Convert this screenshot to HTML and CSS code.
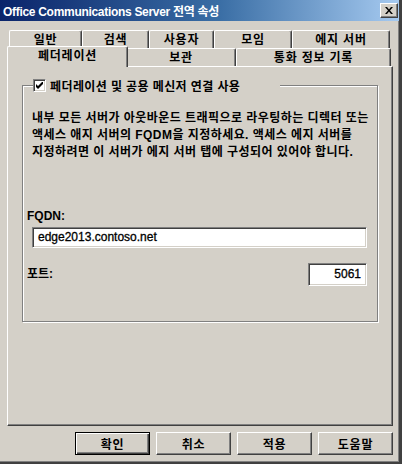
FILE: index.html
```html
<!DOCTYPE html>
<html lang="ko">
<head>
    <meta charset="UTF-8">
    <title>Office Communications Server 전역 속성</title>
    <link rel="stylesheet" href="styles.css">
</head>
<body>
    <div class="window">
        <!-- Title bar -->
        <div class="titlebar">
            <span class="title">Office Communications Server 전역 속성</span>
            <span class="close-btn">
                <svg width="8" height="7" viewBox="0 0 8 7"><path d="M0 0h2l2 2.5L6 0h2L5 3.5 8 7H6L4 4.5 2 7H0l3-3.5z" fill="#000"/></svg>
            </span>
        </div>

        <!-- Tabs -->
        <div class="tabs">
            <div class="tab-row">
                <div class="tab t-general">일반</div>
                <div class="tab t-search">검색</div>
                <div class="tab t-user">사용자</div>
                <div class="tab t-meeting">모임</div>
                <div class="tab t-edge">에지 서버</div>
            </div>
            <div class="tab-row">
                <div class="tab active t-federation">페더레이션</div>
                <div class="tab t-archive">보관</div>
                <div class="tab t-cdr">통화 정보 기록</div>
            </div>
        </div>

        <!-- Tab page -->
        <div class="panel">
            <div class="group">
                <div class="legend">
                    <span class="checkbox">
                        <svg width="7" height="7" viewBox="0 0 7 7"><path d="M0 2v3l2 2 5-5V-1L2 4z" fill="#000"/></svg>
                    </span>
                    <span>페더레이션 및 공용 메신저 연결 사용</span>
                </div>
                <p class="desc">
                    내부 모든 서버가 아웃바운드 트래픽으로 라우팅하는 디렉터 또는<br>
                    액세스 애지 서버의 FQDM을 지정하세요. 액세스 에지 서버를<br>
                    지정하려면 이 서버가 에지 서버 탭에 구성되어 있어야 합니다.
                </p>
                <div class="field-label">FQDN:</div>
                <div class="textbox wide">edge2013.contoso.net</div>
                <div class="port-row">
                    <span class="field-label">포트:</span>
                    <div class="textbox port">5061</div>
                </div>
            </div>
        </div>

        <!-- Dialog buttons -->
        <div class="buttons">
            <button class="default">확인</button>
            <button>취소</button>
            <button>적용</button>
            <button>도움말</button>
        </div>
    </div>
</body>
</html>
```

FILE: styles.css
```css
/* Classic dialog */
body {
    margin: 0;
    padding: 0;
    background: #d4d0c8;
    font-family: "Liberation Sans", "Noto Sans CJK KR", sans-serif;
    font-size: 12px;
    font-weight: bold;
    color: #000;
}

.window {
    box-sizing: border-box;
    width: 402px;
    height: 464px;
    background: #d4d0c8;
    border-right: 3px solid #404040;
    border-bottom: 2px solid #404040;
    box-shadow: inset -1px -1px 0 #808080;
}

.titlebar {
    height: 21px;
    display: flex;
    align-items: center;
    justify-content: space-between;
    padding: 0 1px 0 3px;
    background: linear-gradient(to right, #0a246a, #3a6ea5 55%, #a6caf0);
}

.title {
    color: #fff;
    font-size: 12px;
    letter-spacing: -0.3px;
}

.close-btn {
    box-sizing: border-box;
    width: 18px;
    height: 15px;
    display: flex;
    align-items: center;
    justify-content: center;
    background: #d4d0c8;
    border-top: 1px solid #fff;
    border-left: 1px solid #fff;
    border-right: 1px solid #404040;
    border-bottom: 1px solid #404040;
    box-shadow: inset -1px -1px 0 #808080;
}

/* Tabs */
.tabs {
    padding: 9px 0 0 9px;
}

.tab-row {
    display: flex;
    height: 18px;
}

.tab {
    box-sizing: border-box;
    height: 18px;
    line-height: 18px;
    text-align: center;
    background: #d4d0c8;
    border-top: 1px solid #fff;
    border-left: 1px solid #fff;
    border-right: 1px solid #404040;
    box-shadow: inset -1px 0 0 #808080;
    border-radius: 2px 2px 0 0;
    letter-spacing: 0.8px;
}

.t-general { width: 73px; }
.t-search { width: 67px; }
.t-user { width: 65px; }
.t-meeting { width: 78px; }
.t-edge { width: 98px; }
.t-archive { width: 110px; }
.t-cdr { width: 155px; }

.tab.active {
    position: relative;
    z-index: 1;
    width: 121px;
    height: 21px;
    margin: -2px -2px 0;
    line-height: 19px;
}

/* Tab page */
.panel {
    box-sizing: border-box;
    width: 386px;
    height: 360px;
    margin-left: 7px;
    border-top: 1px solid #fff;
    border-left: 1px solid #fff;
    border-right: 1px solid #404040;
    border-bottom: 1px solid #404040;
    box-shadow: inset -1px -1px 0 #808080;
    padding: 18px 0 0 14px;
}

.group {
    position: relative;
    box-sizing: border-box;
    width: 356px;
    height: 237px;
    border: 1px solid #808080;
    box-shadow: 1px 1px 0 #fff, inset 1px 1px 0 #fff;
    padding: 0 10px 0 4px;
}

.legend {
    position: absolute;
    top: -7px;
    left: 10px;
    width: 247px;
    height: 13px;
    display: flex;
    align-items: center;
    gap: 4px;
    background: #d4d0c8;
    letter-spacing: 0.4px;
}

.checkbox {
    box-sizing: border-box;
    width: 13px;
    height: 13px;
    display: flex;
    align-items: center;
    justify-content: center;
    background: #fff;
    border-top: 1px solid #808080;
    border-left: 1px solid #808080;
    border-right: 1px solid #fff;
    border-bottom: 1px solid #fff;
    box-shadow: inset 1px 1px 0 #404040, inset -1px -1px 0 #d4d0c8;
}

.desc {
    margin: 24px 0 0 5px;
    line-height: 17px;
    letter-spacing: 0.45px;
    white-space: nowrap;
}

.field-label {
    margin-top: 47px;
    line-height: 17px;
}

.textbox {
    box-sizing: border-box;
    height: 21px;
    line-height: 19px;
    padding: 0 5px;
    background: #fff;
    border-top: 1px solid #808080;
    border-left: 1px solid #808080;
    border-right: 1px solid #fff;
    border-bottom: 1px solid #fff;
    box-shadow: inset 1px 1px 0 #404040, inset -1px -1px 0 #d4d0c8;
    font-weight: normal;
    -webkit-text-stroke: 0.3px #000;
}

.textbox.wide {
    margin: 2px 0 0 5px;
}

.port-row {
    display: flex;
    align-items: center;
    justify-content: space-between;
    margin-top: 15px;
    height: 23px;
}

.port-row .field-label {
    margin-top: 0;
}

.textbox.port {
    width: 59px;
    height: 23px;
    line-height: 21px;
    text-align: right;
}

/* Buttons */
.buttons {
    display: flex;
    justify-content: flex-end;
    gap: 6px;
    margin-top: 6px;
    padding-right: 6px;
}

.buttons button {
    box-sizing: border-box;
    width: 75px;
    height: 23px;
    padding: 0;
    font: inherit;
    letter-spacing: 0.8px;
    background: #d4d0c8;
    border-top: 1px solid #fff;
    border-left: 1px solid #fff;
    border-right: 1px solid #404040;
    border-bottom: 1px solid #404040;
    box-shadow: inset -1px -1px 0 #808080;
}

.buttons button.default {
    border: 1px solid #000;
    box-shadow: inset 1px 1px 0 #fff, inset -1px -1px 0 #404040, inset -2px -2px 0 #808080;
}
```
